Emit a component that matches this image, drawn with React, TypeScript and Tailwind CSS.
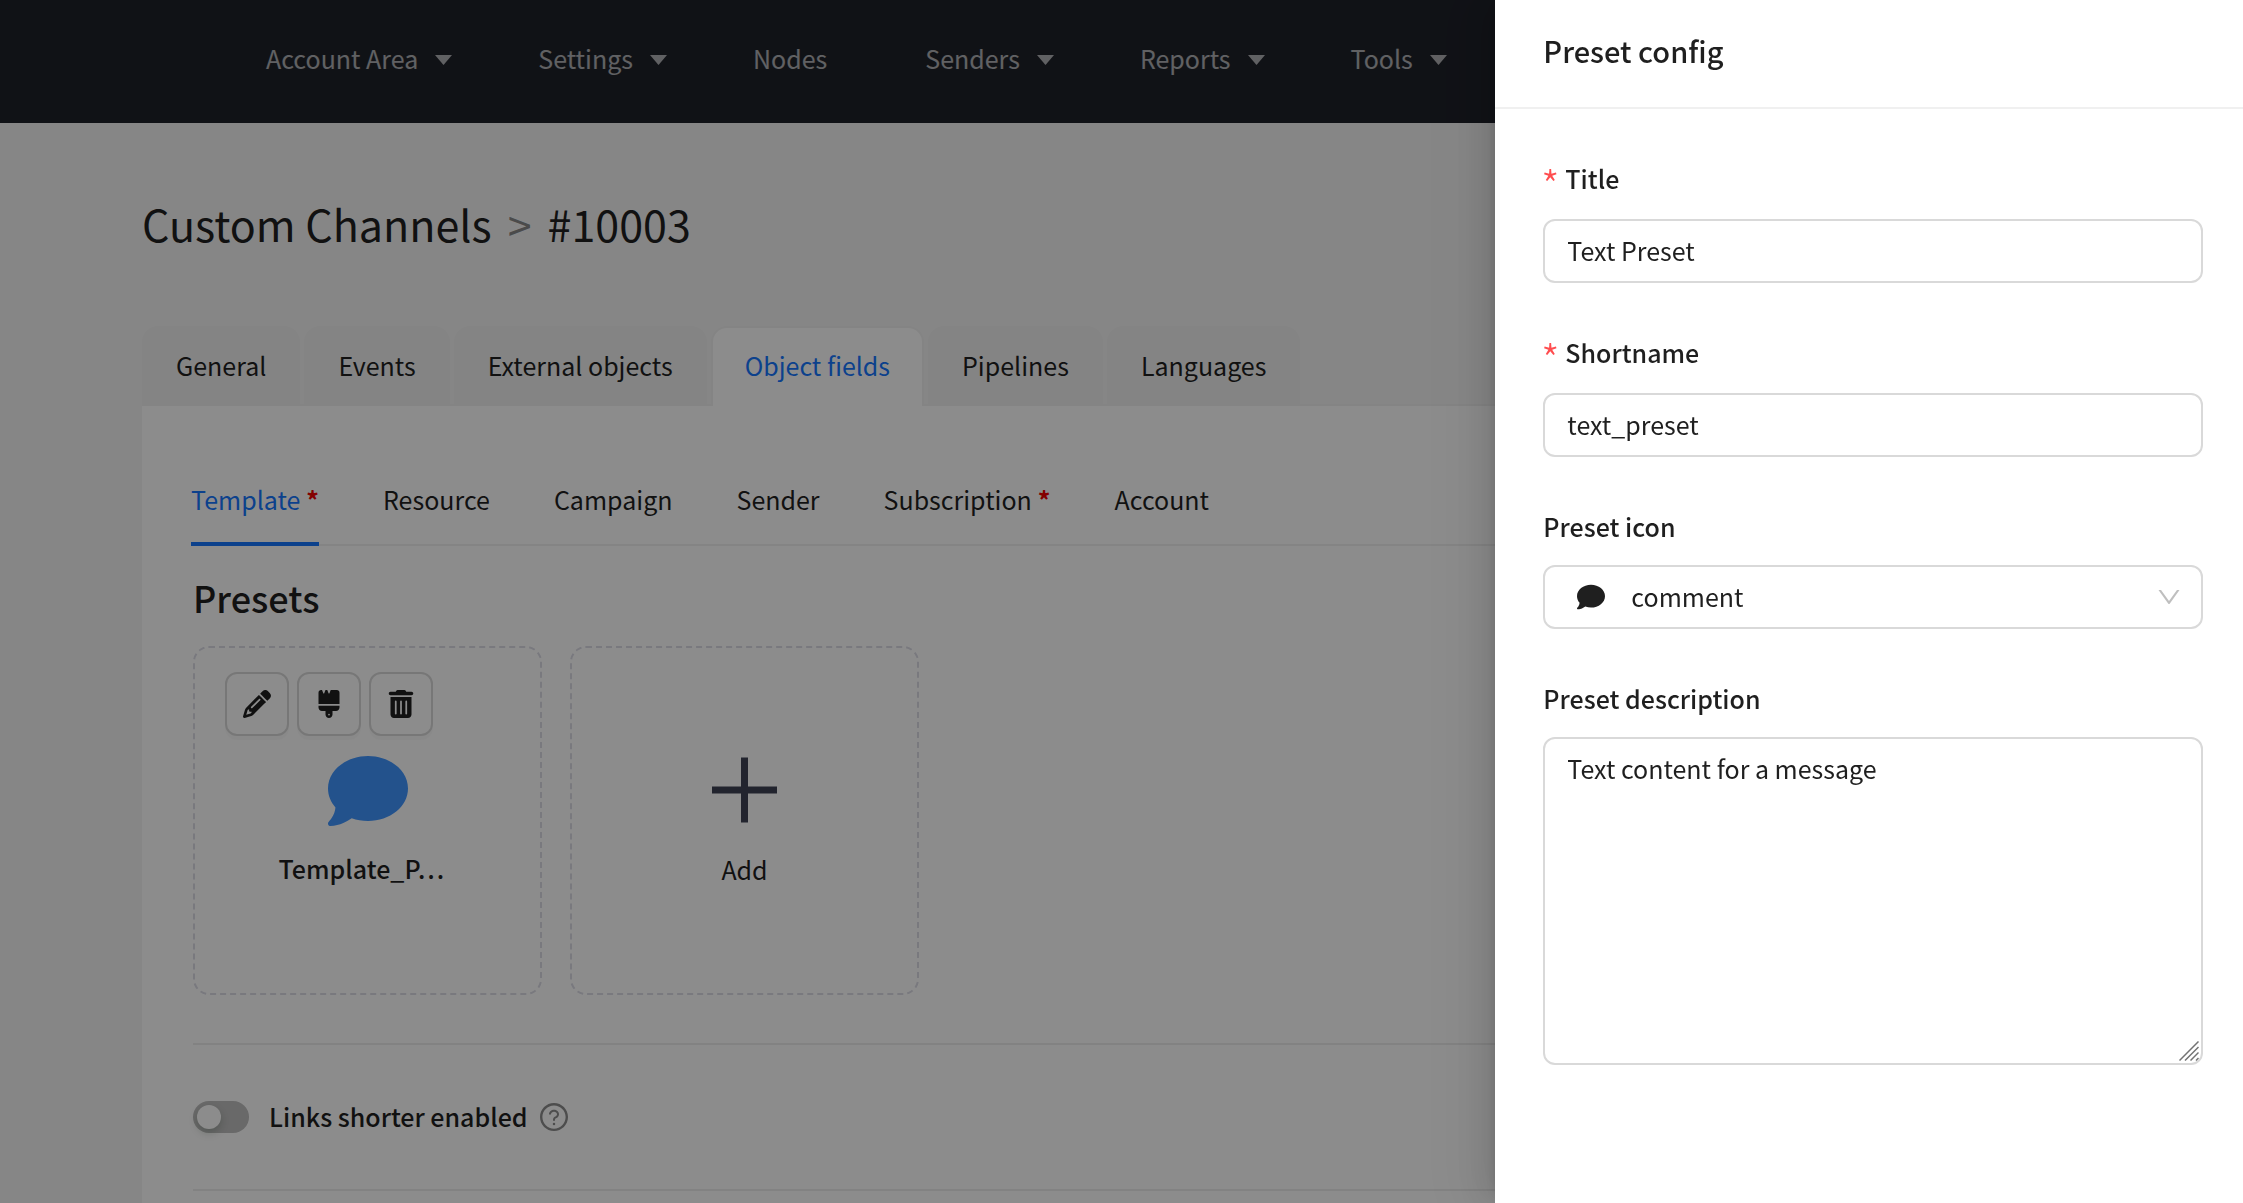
import { AiOutlineDown, AiOutlineQuestionCircle } from "react-icons/ai";
import { FaBrush, FaComment, FaPencil, FaTrashCan } from "react-icons/fa6";

const navItems = [
  { label: "Account Area", menu: true },
  { label: "Settings", menu: true },
  { label: "Nodes", menu: false },
  { label: "Senders", menu: true },
  { label: "Reports", menu: true },
  { label: "Tools", menu: true },
];

const tabs = ["General", "Events", "External objects", "Object fields", "Pipelines", "Languages"];

const objectTabs = [
  { label: "Template", required: true },
  { label: "Resource", required: false },
  { label: "Campaign", required: false },
  { label: "Sender", required: false },
  { label: "Subscription", required: true },
  { label: "Account", required: false },
];

const presetActions = [
  { label: "Edit", Icon: FaPencil },
  { label: "Style", Icon: FaBrush },
  { label: "Delete", Icon: FaTrashCan },
];

function Caret() {
  return (
    <svg width="17" height="10" viewBox="0 0 17 10" fill="currentColor" aria-hidden="true">
      <path d="M0 0h17L8.5 10z" />
    </svg>
  );
}

function Header() {
  return (
    <header className="h-[123px] bg-[#1e2129] pl-[266px]">
      <nav className="flex h-full items-center gap-[86px] pb-[7px] text-white/65">
        {navItems.map(({ label, menu }) => (
          <a key={label} href="#" className={menu ? "flex items-center gap-[17px] whitespace-nowrap" : "pr-3"}>
            {label}
            {menu && (
              <span className="pt-1">
                <Caret />
              </span>
            )}
          </a>
        ))}
      </nav>
    </header>
  );
}

function Tabs() {
  return (
    <div className="flex gap-1 border-b-2 border-[#f0f0f0]">
      {tabs.map((tab) => (
        <button
          key={tab}
          type="button"
          className={
            tab === "Object fields"
              ? "-mb-0.5 h-20 shrink-0 rounded-t-2xl border-2 border-b-0 border-[#f0f0f0] bg-white px-8 pb-1 text-[#1677ff]"
              : "h-[78px] shrink-0 rounded-t-2xl border-2 border-b-0 border-[#f0f0f0] bg-[#f0f0f0] px-8 pb-0.5"
          }
        >
          {tab}
        </button>
      ))}
    </div>
  );
}

function ObjectTabs() {
  return (
    <div className="flex gap-16 border-b-2 border-[#f0f0f0]">
      {objectTabs.map(({ label, required }, i) => (
        <button
          key={label}
          type="button"
          className={
            i === 0
              ? "-mb-0.5 flex h-[90px] border-b-4 border-[#1677ff] leading-[86px] text-[#1677ff]"
              : "flex h-[88px] leading-[86px]"
          }
        >
          {label}
          {required && <span className="pl-1.5 font-bold text-[#f00000]">*</span>}
        </button>
      ))}
    </div>
  );
}

function Presets() {
  return (
    <section>
      <h2 className="pt-[25px] text-[36px] leading-[52px] font-medium">Presets</h2>
      <div className="mt-[23px] flex gap-7">
        <div className="flex h-[349px] w-[349px] flex-col items-center rounded-2xl border-2 border-dashed border-[#dcdce6]">
          <div className="flex gap-2 self-start pt-6 pl-[30px]">
            {presetActions.map(({ label, Icon }) => (
              <button
                key={label}
                type="button"
                aria-label={label}
                className="flex size-16 items-center justify-center rounded-xl border-2 border-[#d9d9d9] bg-white text-[28px] shadow-[0_4px_0_rgba(0,0,0,0.02)]"
              >
                <Icon />
              </button>
            ))}
          </div>
          <FaComment className="mt-[15px] size-20 text-[#4096ff]" />
          <div className="mt-[15px] w-[178px] whitespace-nowrap font-medium">Template_P…</div>
        </div>
        <button
          type="button"
          className="flex h-[349px] w-[349px] flex-col items-center rounded-2xl border-2 border-dashed border-[#dcdce6] pt-[109px]"
        >
          <svg width="65" height="66" viewBox="0 0 65 66" className="text-[#3f4354]" aria-hidden="true">
            <path d="M32.5 .5v65M0 33h65" stroke="currentColor" strokeWidth="7" />
          </svg>
          <span className="mt-6">Add</span>
        </button>
      </div>
    </section>
  );
}

function LinksSwitch() {
  return (
    <div className="mt-12 flex h-[148px] items-center border-y-2 border-[#ededed]">
      <input
        id="links-shorter"
        type="checkbox"
        role="switch"
        className="h-8 w-14 appearance-none rounded-full bg-[#bfbfbf] before:m-1 before:block before:size-6 before:rounded-full before:bg-white before:shadow-[0_4px_8px_rgba(0,35,11,0.2)]"
      />
      <label htmlFor="links-shorter" className="pb-0.5 pl-5 font-medium">
        Links shorter enabled
      </label>
      <AiOutlineQuestionCircle className="ml-2.5 size-8 text-black/45" />
    </div>
  );
}

function FieldLabel({ htmlFor, required, children }: { htmlFor: string; required?: boolean; children: string }) {
  return (
    <label
      htmlFor={htmlFor}
      className={
        required
          ? "mb-4 flex h-[46px] items-center gap-2 pb-1 font-medium"
          : "mb-4 flex h-11 items-center pb-0.5 font-medium"
      }
    >
      {required && <span className="flex w-3.5 justify-center pt-3 text-[42px] font-light text-[#ff4d4f]">*</span>}
      {children}
    </label>
  );
}

function PresetDrawer() {
  return (
    <aside className="fixed inset-y-0 right-0 w-1/3 bg-white shadow-[-12px_0_32px_0_rgba(0,0,0,0.1),-6px_0_12px_-8px_rgba(0,0,0,0.16),-18px_0_56px_16px_rgba(0,0,0,0.05)]">
      <div className="flex h-[109px] items-center border-b-2 border-[#f0f0f0] px-12 pb-2">
        <h2 className="text-[29px] leading-[44px] font-medium">Preset config</h2>
      </div>
      <form className="flex flex-col gap-12 pt-12 pr-10 pl-12">
        <div>
          <FieldLabel htmlFor="title" required>
            Title
          </FieldLabel>
          <input
            id="title"
            defaultValue="Text Preset"
            className="block h-16 w-full rounded-xl border-2 border-[#d9d9d9] px-[22px] pb-0.5"
          />
        </div>
        <div>
          <FieldLabel htmlFor="shortname" required>
            Shortname
          </FieldLabel>
          <input
            id="shortname"
            defaultValue="text_preset"
            className="block h-16 w-full rounded-xl border-2 border-[#d9d9d9] px-[22px] pb-0.5"
          />
        </div>
        <div>
          <FieldLabel htmlFor="icon">Preset icon</FieldLabel>
          <div className="relative">
            <select
              id="icon"
              defaultValue="comment"
              className="block h-16 w-full appearance-none rounded-xl border-2 border-[#d9d9d9] bg-white pb-0.5 pl-[86px]"
            >
              <option value="comment">comment</option>
            </select>
            <FaComment className="pointer-events-none absolute top-[18px] left-[34px] size-7" />
            <AiOutlineDown className="pointer-events-none absolute top-[18px] right-5 size-7 text-black/25" />
          </div>
        </div>
        <div>
          <FieldLabel htmlFor="description">Preset description</FieldLabel>
          <div className="relative">
            <textarea
              id="description"
              defaultValue="Text content for a message"
              className="block h-[328px] w-full resize-none rounded-xl border-2 border-[#d9d9d9] px-[22px] py-[7px] leading-[44px]"
            />
            <svg
              className="pointer-events-none absolute right-1 bottom-1 text-[#737373]"
              width="20"
              height="20"
              viewBox="0 0 20 20"
              aria-hidden="true"
            >
              <path
                d="M.5 19.5l19-19M6 19.5L19.5 6M11.5 19.5l8-8M17 19.5l2.5-2.5"
                stroke="currentColor"
                strokeWidth="1.5"
              />
            </svg>
          </div>
        </div>
      </form>
    </aside>
  );
}

export default function App() {
  return (
    <div className="h-screen overflow-hidden bg-[#f5f5f5] font-['Noto_Sans_CJK_SC',sans-serif] text-[25px] leading-[44px] text-[#1f1f1f]">
      <Header />
      <main className="px-[142px] pt-[66px]">
        <h1 className="flex gap-4 text-[43px] leading-[68px]">
          <span>Custom Channels</span>
          <span className="text-black/45">&gt;</span>
          <span>#10003</span>
        </h1>
        <div className="pt-[69px]">
          <Tabs />
          <div className="min-h-screen bg-white px-[49px] pt-[50px]">
            <ObjectTabs />
            <div className="px-0.5">
              <Presets />
              <LinksSwitch />
            </div>
          </div>
        </div>
      </main>
      <div className="fixed inset-0 bg-black/45" />
      <PresetDrawer />
    </div>
  );
}
